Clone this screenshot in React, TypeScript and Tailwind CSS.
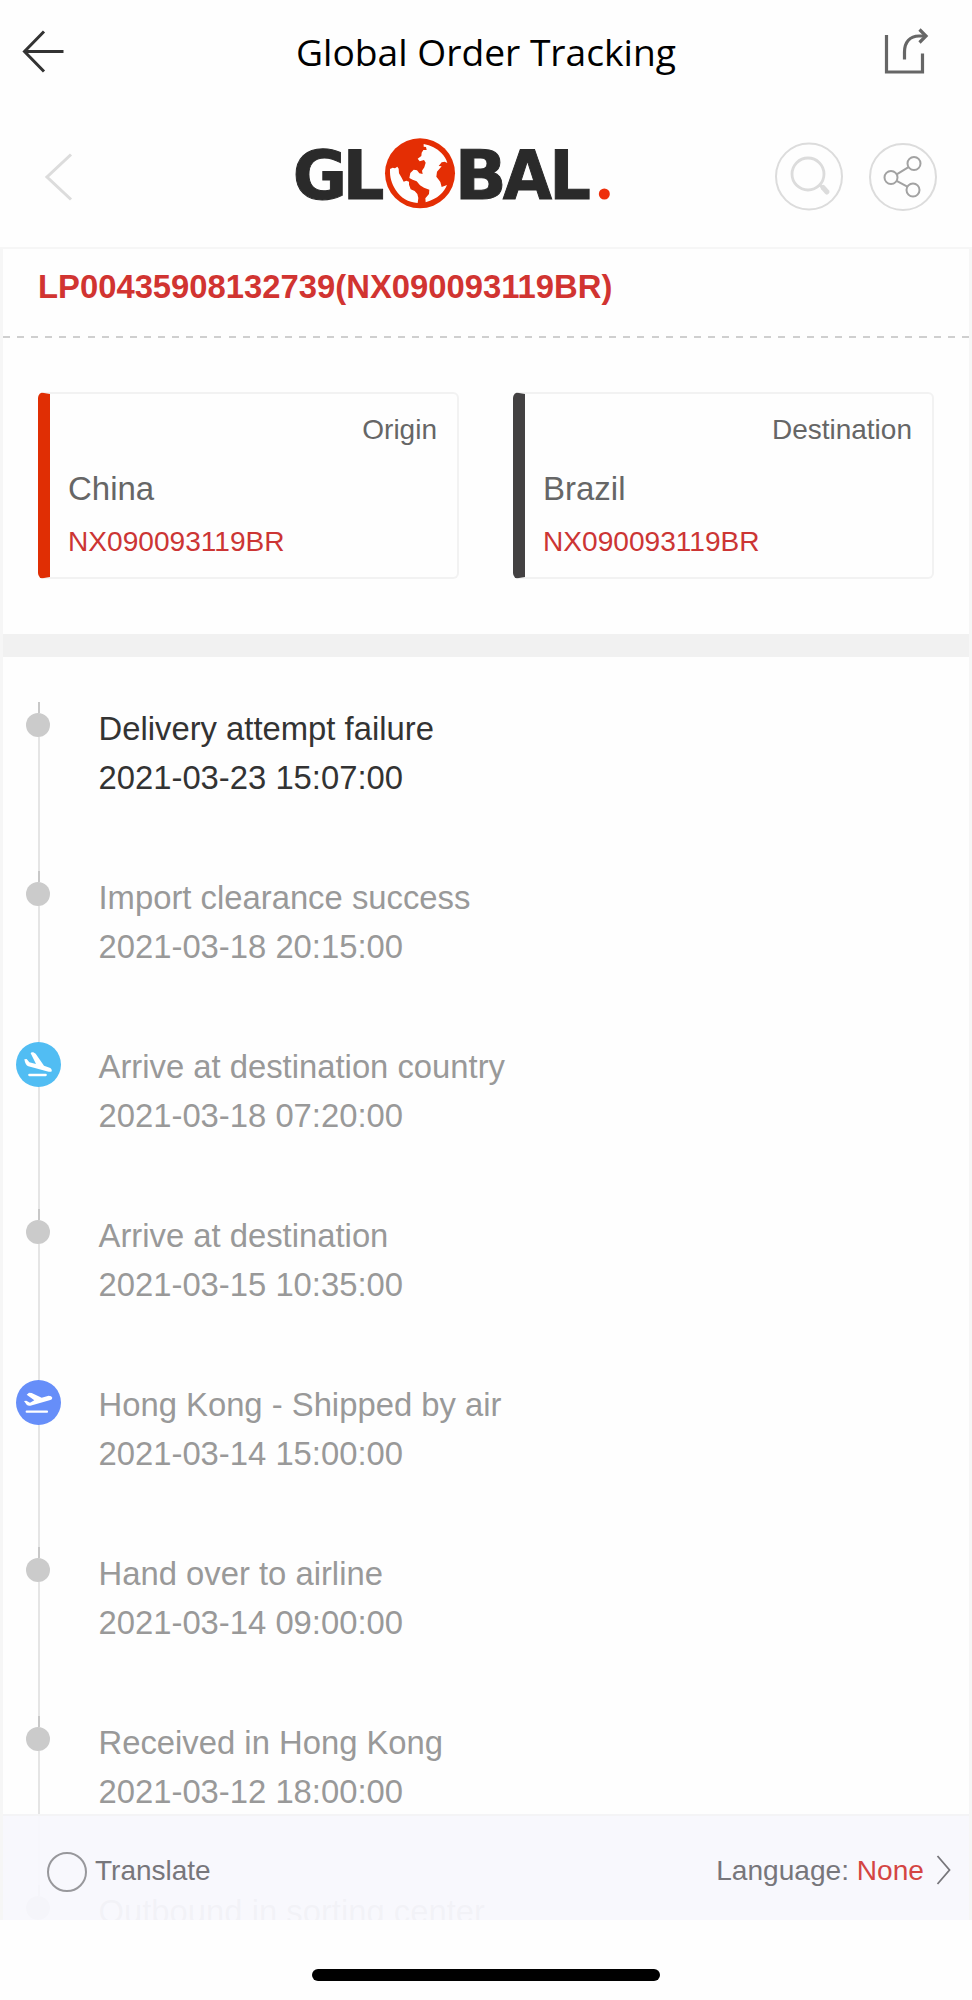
import type { ReactNode } from "react";

type TrackingEvent = {
  title: string;
  time: string;
  icon?: "landing" | "takeoff";
};

const events: TrackingEvent[] = [
  { title: "Delivery attempt failure", time: "2021-03-23 15:07:00" },
  { title: "Import clearance success", time: "2021-03-18 20:15:00" },
  {
    title: "Arrive at destination country",
    time: "2021-03-18 07:20:00",
    icon: "landing",
  },
  { title: "Arrive at destination", time: "2021-03-15 10:35:00" },
  {
    title: "Hong Kong - Shipped by air",
    time: "2021-03-14 15:00:00",
    icon: "takeoff",
  },
  { title: "Hand over to airline", time: "2021-03-14 09:00:00" },
  { title: "Received in Hong Kong", time: "2021-03-12 18:00:00" },
  { title: "Outbound in sorting center", time: "" },
];

// Wordmark letters, the globe stands in for the O
const logoLetters = [
  { char: "G", x: 38, width: 163 },
  { char: "L", x: 188, width: 125 },
  { char: "B", x: 524, width: 156 },
  { char: "A", x: 668, width: 148 },
  { char: "L", x: 808, width: 125 },
];

const Header = () => (
  <header className="flex h-[102px] shrink-0 items-center">
    <button className="w-[200px] pl-[22px]">
      <svg width="44" height="46" viewBox="0 0 44 46" fill="none" stroke="#333" strokeWidth="3">
        <path d="M22 3.5 2.5 23.5 22 43.5M2.5 23.5H41.5" />
      </svg>
    </button>

    <h1 className="mt-px flex-1 text-center font-['Open_Sans',sans-serif] text-[37.2px] whitespace-nowrap text-black">
      Global Order Tracking
    </h1>

    <button className="flex w-[200px] justify-end pr-[41px]">
      <svg width="48" height="48" viewBox="0 0 48 48" fill="none" stroke="#666" strokeWidth="3.2">
        <path d="M3.5 8V45H39.5V26.5" />
        <path d="M21.5 32.5V25C21.5 15 27 9 36 9H43" />
        <path d="M36.5 2.5 43 9 36.5 15.5" />
      </svg>
    </button>
  </header>
);

const Logo = () => (
  <svg width="340" height="100" viewBox="0 0 1020 300">
    <g
      fill="#2a2a2a"
      stroke="#2a2a2a"
      strokeWidth="3"
      fontFamily="'DejaVu Sans', sans-serif"
      fontWeight="700"
      fontSize="202"
    >
      {logoLetters.map(({ char, x, width }) => (
        <text
          key={x}
          x={x}
          y="236"
          textLength={width}
          lengthAdjust="spacingAndGlyphs"
        >
          {char}
        </text>
      ))}
    </g>

    {/* Globe */}
    <circle cx="420" cy="160" r="105" fill="#e42e04" />
    <path
      fill="#fefefe"
      d="M330 147 338 143 345 145 352 140 356 146 357 160 364 172 371 185 379 182 387 185 387 194 392 208 404 213 412 222 415 234 413 249C385 247 362 234 347 210 335 191 329 172 330 147Z"
    />
    <path
      fill="#fefefe"
      d="M431 72C452 76 471 85 484 99 493 108 499 118 502 129L494 125 485 127 476 138 485 139 471 155 469 170 475 178 481 186 485 201 501 195C492 217 474 236 437 247L436 235 447 222 448 209 432 203 420 196 410 184 398 179 388 174 391 159 401 149 411 151 418 160 428 162 426 152 433 142 437 128 432 120 419 124 413 116 424 108 425 98 430 90 440 90 438 81 431 80Z"
    />

    <circle cx="973" cy="222" r="16.5" fill="#ee2f0b" />
  </svg>
);

const BrandBar = () => (
  <div className="flex h-[145px] shrink-0 items-center">
    <svg width="30" height="50" viewBox="0 0 30 50" fill="none" stroke="#dcdcdc" strokeWidth="3" className="ml-[44px] mt-[5px]">
      <path d="M27 2.5 3 25 27 47.5" />
    </svg>

    <div className="-mt-[9px] ml-[206px]">
      <Logo />
    </div>

    <div className="ml-[154px] mt-[4px] flex gap-[24px]">
      <svg width="70" height="70" viewBox="0 0 70 70" fill="none" stroke="#dcdcdc">
        <circle cx="35" cy="34.5" r="33" strokeWidth="2" />
        <circle cx="34" cy="32" r="16" strokeWidth="2.8" />
        <path d="M45.5 42.5 48.5 45.5" strokeWidth="3" />
        <path d="M49 45.5 53 50" strokeWidth="5" strokeLinecap="round" />
      </svg>
      <svg width="70" height="70" viewBox="0 0 70 70" fill="none" stroke="#a2a2a2" strokeWidth="2">
        <circle cx="35" cy="35" r="33" stroke="#dcdcdc" />
        <circle cx="23" cy="35.5" r="6.5" />
        <circle cx="46" cy="21.5" r="6.5" />
        <circle cx="45" cy="48" r="6.5" />
        <path d="M28.7 32.3 40.5 25.1M28.6 38.8 39.3 44.7" />
      </svg>
    </div>
  </div>
);

type PlaceCardProps = {
  label: string;
  country: string;
  code: string;
  accent: string;
};

const PlaceCard = ({ label, country, code, accent }: PlaceCardProps) => (
  <div
    className={`flex h-[187px] w-[421px] flex-col rounded-[6px] border-2 border-l-[12px] border-[#f2f2f2] pr-[20px] pl-[18px] ${accent}`}
  >
    <div className="mt-[18px] text-right text-[28px] leading-[36px] text-[#666]">
      {label}
    </div>
    <div className="mt-[19px] text-[33px] leading-[44px] text-[#666]">
      {country}
    </div>
    <div className="mt-[13px] text-[28.1px] leading-[36px] text-[#cc3534]">
      {code}
    </div>
  </div>
);

const LandingIcon = () => (
  <svg width="45" height="45" viewBox="0 0 135 135">
    <circle cx="67.5" cy="67.5" r="67.5" fill="#51bdf3" />
    <path
      fill="#fff"
      d="M25 52 32 51 40 61 60 66 44 34Q46 29 52 31L59 35 84 71 103 78Q110 84 106 89L98 89 37 73Q28 70 25 52Z"
    />
    <path d="M40 99H89" stroke="#fff" strokeWidth="7" strokeLinecap="round" />
  </svg>
);

const TakeoffIcon = () => (
  <svg width="45" height="45" viewBox="0 0 135 135">
    <circle cx="67.5" cy="67.5" r="67.5" fill="#668ef9" />
    <path
      fill="#fff"
      d="M24 63 31 62 42 68 55 61 32 44 39 38 47 39 77 53 98 47Q107 47 109 53 109 58 103 60L43 77Q36 78 32 74Z"
    />
    <path d="M32 95H93" stroke="#fff" strokeWidth="6.5" strokeLinecap="round" />
  </svg>
);

const Marker = ({ icon }: { icon?: TrackingEvent["icon"] }) => {
  if (icon) {
    return (
      <div className="flex w-[77px] flex-col items-center">
        <div className="h-[2px] w-[2px] bg-[#e5e5e5]" />
        {icon === "landing" ? <LandingIcon /> : <TakeoffIcon />}
        <div className="w-[2px] flex-1 bg-[#e5e5e5]" />
      </div>
    );
  }

  return (
    <div className="flex w-[77px] flex-col items-center">
      <div className="h-[11px] w-[2px] bg-[#c8c8c8]" />
      <div className="mr-[2px] size-[24px] rounded-full bg-[#cbcbcb]" />
      <div className="w-[2px] flex-1 bg-[#e5e5e5]" />
    </div>
  );
};

const TimelineRow = ({ event, active }: { event: TrackingEvent; active: boolean }) => (
  <li className="flex h-[169px] shrink-0">
    <Marker icon={event.icon} />
    <div
      className={`pt-[2px] pl-[21.5px] text-[32.8px] leading-[49px] whitespace-nowrap ${
        active ? "text-[#333]" : "text-[#999]"
      }`}
    >
      <p>{event.title}</p>
      <p>{event.time}</p>
    </div>
  </li>
);

const Panel = ({ children }: { children: ReactNode }) => (
  <main className="relative flex h-[1673px] shrink-0 flex-col overflow-hidden border-x-3 border-t-2 border-[#f6f6f6]">
    {children}
  </main>
);

// Floats over the bottom of the list, rows stay faintly visible behind it
const TranslateBar = () => (
  <div className="absolute -inset-x-[3px] bottom-0 flex h-[106px] items-center border-t-2 border-[#f4f4f6] bg-[#f8f8fd]/94 pr-[21px] pl-[47px] text-[28px] text-[#77767b]">
    <div className="mt-[8px] size-[40px] rounded-full border-2 border-[#98989c]" />
    <span className="ml-[8px] mt-[5px]">Translate</span>
    <span className="mt-[6px] ml-auto text-[28.1px]">
      Language: <span className="text-[#d44543]">None</span>
    </span>
    <svg width="15" height="30" viewBox="0 0 15 30" fill="none" stroke="#77767b" strokeWidth="1.8" className="ml-[12px] mt-[4px]">
      <path d="M1.5 1 13.5 15 1.5 29" />
    </svg>
  </div>
);

const App = () => {
  return (
    <div className="flex h-[2000px] w-[972px] flex-col overflow-hidden bg-[#fefefe] font-['Liberation_Sans',Arial,sans-serif]">
      <Header />
      <BrandBar />

      <Panel>
        <div className="h-[87px] shrink-0 pt-[16px] pl-[35px] text-[32.8px] leading-[44px] font-bold text-[#d13431]">
          LP00435908132739(NX090093119BR)
        </div>
        <div className="h-[2px] shrink-0 bg-[repeating-linear-gradient(90deg,#cfcfcf_0_7px,transparent_7px_14.1px)]" />

        {/* Origin / destination */}
        <div className="flex h-[296px] shrink-0 gap-[54px] pt-[54px] pl-[35px]">
          <PlaceCard
            label="Origin"
            country="China"
            code="NX090093119BR"
            accent="border-l-[#e02e04]"
          />
          <PlaceCard
            label="Destination"
            country="Brazil"
            code="NX090093119BR"
            accent="border-l-[#434142]"
          />
        </div>

        <div className="h-[23px] shrink-0 bg-[#f1f1f1]" />

        <ul className="-ml-[3px] mt-[45px] flex flex-col">
          {events.map((event, i) => (
            <TimelineRow key={event.title} event={event} active={i === 0} />
          ))}
        </ul>

        <TranslateBar />
      </Panel>

      {/* Home indicator */}
      <div className="mt-[49px] ml-[312px] h-[12px] w-[348px] shrink-0 rounded-full bg-black" />
    </div>
  );
};

export default App;
